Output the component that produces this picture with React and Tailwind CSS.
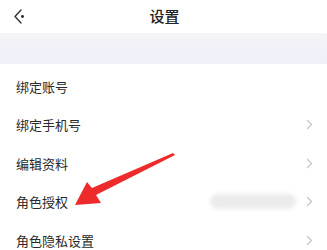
import React from 'react';

const rows = [
  { label: '绑定账号', chevron: false },
  { label: '绑定手机号', chevron: true },
  { label: '编辑资料', chevron: true },
  { label: '角色授权', chevron: true, blurred: true },
  { label: '角色隐私设置', chevron: true },
];

const Chevron = () => (
  <svg width="7" height="11" viewBox="0 0 7 11" fill="none">
    <path d="M1.5 1.5l4 4-4 4" stroke="#c4c4c8" strokeWidth="1.2" strokeLinecap="round" strokeLinejoin="round" />
  </svg>
);

const App = () => {
  return (
    <div className="relative w-[327px] h-[250px] overflow-hidden bg-white font-['Noto_Sans_CJK_SC',sans-serif]">
      <div className="h-[33px] flex items-center justify-center relative bg-white">
        <svg className="absolute left-[12px] top-[8px]" width="14" height="17" viewBox="0 0 14 17" fill="none">
          <path d="M9 2L3 8.5 9 15" stroke="#333" strokeWidth="1.4" strokeLinecap="round" strokeLinejoin="round" />
          <circle cx="10.5" cy="8.5" r="1.4" fill="#222" />
        </svg>
        <span className="text-[15px] font-medium text-[#222] ml-[2px]">设置</span>
      </div>
      <div className="h-[31px] bg-gradient-to-b from-[#f5f5f6] via-[#f1f1f8] to-[#f0f0f9]" />
      <div className="pt-[3px]">
        {rows.map((r) => (
          <div key={r.label} className="h-[38.5px] flex items-center pl-[16px] pr-[14px]">
            <span className="text-[13px] text-[#2a2a2a] leading-none">{r.label}</span>
            <div className="flex-1" />
            {r.blurred && (
              <div className="w-[86px] h-[15px] mr-[10px] rounded-full bg-[#ebebeb] blur-[2px]" />
            )}
            {r.chevron && <Chevron />}
          </div>
        ))}
      </div>
      <svg className="absolute left-0 top-0 pointer-events-none" width="327" height="250" viewBox="0 0 327 250">
        <path d="M173 153 L175 155 L96 195 L101 203 L75 205 L87 182 L92 188 Z" fill="#ee2b2b" />
      </svg>
    </div>
  );
};

export default App;
